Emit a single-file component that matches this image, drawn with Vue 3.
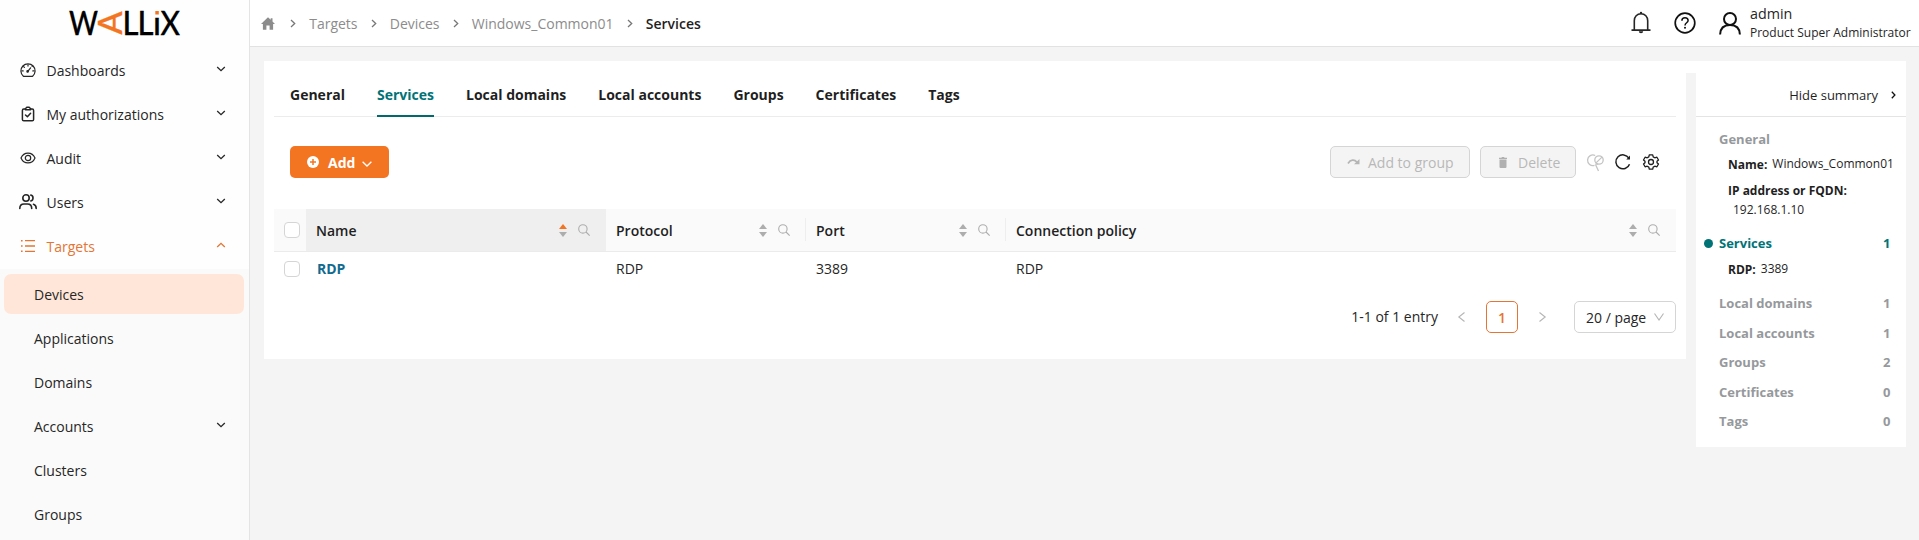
<script setup>
const menu = [
  { label: 'Dashboards', icon: 'dash' },
  { label: 'My authorizations', icon: 'clip' },
  { label: 'Audit', icon: 'eye' },
  { label: 'Users', icon: 'users' },
  { label: 'Targets', icon: 'list', open: true }
]
const submenu = [
  { label: 'Devices', active: true },
  { label: 'Applications' },
  { label: 'Domains' },
  { label: 'Accounts', expandable: true },
  { label: 'Clusters' },
  { label: 'Groups' }
]
const crumbs = ['Targets', 'Devices', 'Windows_Common01', 'Services']
const tabs = ['General', 'Services', 'Local domains', 'Local accounts', 'Groups', 'Certificates', 'Tags']
const columns = ['Name', 'Protocol', 'Port', 'Connection policy']
const counts = [
  ['Local domains', 1],
  ['Local accounts', 1],
  ['Groups', 2],
  ['Certificates', 0],
  ['Tags', 0]
]
</script>

<template>
  <div class="app">
    <aside class="sidebar">
      <div class="brand">
        <svg width="112" height="26" viewBox="0 0 112 26" class="logo">
          <text x="0" y="25" textLength="29" lengthAdjust="spacingAndGlyphs">W</text>
          <text class="mark" transform="translate(53 24.500) rotate(-90)" x="0" y="0" textLength="23" lengthAdjust="spacingAndGlyphs">A</text>
          <text x="53.5" y="25" textLength="16" lengthAdjust="spacingAndGlyphs">L</text>
          <text x="68.5" y="25" textLength="16" lengthAdjust="spacingAndGlyphs">L</text>
          <text x="84" y="25" textLength="8" lengthAdjust="spacingAndGlyphs">ı</text>
          <rect x="86.300" y="1" width="3.500" height="3.500" fill="#f37521" />
          <text x="91.500" y="25" textLength="19.500" lengthAdjust="spacingAndGlyphs">X</text>
        </svg>
      </div>
      <nav>
        <div v-for="m in menu" :key="m.label" class="item" :class="{ open: m.open }">
          <svg class="mi" width="20" height="18" viewBox="0 0 20 18" fill="none" stroke="currentColor" stroke-width="1.2" stroke-linecap="round" stroke-linejoin="round">
            <g v-if="m.icon === 'dash'">
              <path d="M5.4 15.3A7.1 7.1 0 1 1 14.6 15.3Z" />
              <path d="M9.6 10.6L12.6 6.8M10 3.8v1.3M5.6 5.6l.8.8M3.9 9.9h1.3M14.8 9.9h1.3M14.1 5.3l.4-.4" />
              <circle cx="9.6" cy="10.4" r=".7" fill="currentColor" />
            </g>
            <g v-else-if="m.icon === 'clip'" stroke-width="1.5">
              <path d="M7.3 4H5.8a1.4 1.4 0 0 0-1.4 1.4v9a1.4 1.4 0 0 0 1.4 1.4h8.4a1.4 1.4 0 0 0 1.4-1.4v-9A1.4 1.4 0 0 0 14.200 4H12.700" />
              <path d="M7.400 4.800V3.700L8.800 2.300H11.200L12.600 3.700V4.800ZM7.500 10l1.900 1.800 3.200-3.500" />
            </g>
            <g v-else-if="m.icon === 'eye'">
              <path d="M3 9C5.800 2.400 14.200 2.400 17 9C14.200 15.600 5.800 15.600 3 9Z" />
              <circle cx="10" cy="9" r="2.700" />
            </g>
            <g v-else-if="m.icon === 'users'" stroke-width="1.600">
              <circle cx="8" cy="5" r="3.200" />
              <path d="M1.800 15.500C1.800 12.500 3.500 11 6 11H9.500C12 11 13.700 12.500 13.700 15.500M12.800 2.100A3 3 0 0 1 12.800 7.900M15.500 11.300C17.400 11.800 18.200 13.300 18.200 15.500" />
            </g>
            <g v-else stroke-linecap="butt">
              <path d="M7 3.700H17M7 9H17M7 14.300H17" stroke-width="1.300" />
              <path d="M3 3.700h1.600M3 9h1.600M3 14.300h1.600" stroke-width="1.600" />
            </g>
          </svg>
          <span>{{ m.label }}</span>
          <svg class="chev" width="10" height="6" viewBox="0 0 10 6"><path :d="m.open ? 'M1.200 5L5 1.300L8.800 5' : 'M1.200 1L5 4.700L8.800 1'" /></svg>
        </div>
      </nav>
      <div class="sub">
        <div v-for="s in submenu" :key="s.label" class="subitem" :class="{ active: s.active }">
          <span>{{ s.label }}</span>
          <svg v-if="s.expandable" class="chev" width="10" height="6" viewBox="0 0 10 6"><path d="M1.200 1L5 4.700L8.800 1" /></svg>
        </div>
      </div>
    </aside>

    <div class="main">
      <header class="top">
        <svg class="home" width="14" height="13" viewBox="0 0 14 13"><path d="M7 .3L9.700 2.800V1.300H11.500V4.500L14 6.900H12.100V12.700H8.600V8.400H5.400V12.700H1.900V6.900H0Z" fill="#8c8c8c" /></svg>
        <template v-for="(c, i) in crumbs" :key="c">
          <svg class="sep" width="6" height="9" viewBox="0 0 6 9"><path d="M1 1L4.700 4.500L1 8" fill="none" stroke="#777" stroke-width="1.300" /></svg>
          <span class="crumb" :class="{ last: i === 3 }">{{ c }}</span>
        </template>
        <div class="user">
          <svg width="20" height="24" viewBox="0 0 20 24" fill="none" stroke="#262626" stroke-width="1.600">
            <path d="M3.300 18.500V9.700C3.300 5.800 6 2.800 10 2.800S16.700 5.800 16.700 9.700V18.500M.5 19.100H19.500M10 2.800V1" />
            <path d="M7.800 20.300H12.200A2.200 1.900 0 0 1 7.800 20.300Z" fill="#262626" stroke="none" />
            <circle cx="10" cy="2" r="1.200" fill="#262626" stroke="none" />
          </svg>
          <svg class="help" width="22" height="22" viewBox="0 0 22 22" fill="none" stroke="#111">
            <circle cx="11" cy="11" r="9.800" stroke-width="1.700" />
            <path d="M7.900 8.700C7.900 6.700 9.200 5.700 11 5.700S14.100 6.800 14.100 8.500C14.100 10.700 11 10.800 11 13.400" stroke-width="1.500" />
            <circle cx="11" cy="15.800" r="1" fill="#111" stroke="none" />
          </svg>
          <svg class="person" width="22" height="23" viewBox="0 0 22 23" fill="none" stroke="#111" stroke-width="2">
            <circle cx="11" cy="7" r="6" />
            <path d="M1.100 22.500C1.300 16.500 5 13 11 13S20.700 16.500 20.900 22.500" />
          </svg>
          <div class="who">
            <div class="uname">admin</div>
            <div class="role">Product Super Administrator</div>
          </div>
        </div>
      </header>

      <div class="strip"></div>
      <div class="body">
        <section class="card">
          <div class="tabs">
            <div v-for="t in tabs" :key="t" class="tab" :class="{ on: t === 'Services' }">{{ t }}</div>
          </div>
          <div class="tools">
            <button class="add">
              <svg width="12" height="12" viewBox="0 0 12 12"><circle cx="6" cy="6" r="6" fill="#fff" /><path d="M6 3V9M3 6H9" stroke="#f37521" stroke-width="1.500" /></svg>
              <span>Add</span>
              <svg class="caret" width="10" height="6" viewBox="0 0 10 6"><path d="M.6 .7L5 5L9.400 .7" fill="none" stroke="#fff" stroke-width="1.300" /></svg>
            </button>
            <button class="dis togroup">
              <svg width="13" height="8" viewBox="0 0 13 8"><path d="M1 5.500C3.500 1.300 7.500 1.200 10 4.200" fill="none" stroke="#b5b5b5" stroke-width="1.700" /><path d="M12.500 1V6.300H7Z" fill="#b5b5b5" /></svg>
              <span>Add to group</span>
            </button>
            <button class="dis del">
              <svg width="8" height="11" viewBox="0 0 8 11"><path d="M0 .7H2.400L3 0H5L5.600 .7H8V2H0ZM.5 2.600H7.500V10A1 1 0 0 1 6.500 11H1.500A1 1 0 0 1 .5 10Z" fill="#b0b0b0" /></svg>
              <span>Delete</span>
            </button>
            <svg class="t1" width="17" height="18" viewBox="0 0 17 18" fill="none" stroke="#c4c4c4" stroke-width="1.300">
              <path d="M8.200 1.500A5.300 5.300 0 1 0 7.500 11.300M8.500 10.500L11.500 17" />
              <circle cx="12" cy="6" r="4.200" /><path d="M9 8.900L15 3.100M8.500 10.200L11.200 10" />
            </svg>
            <svg class="t2" width="16" height="16" viewBox="0 0 16 16" fill="none" stroke="#1f1f1f" stroke-width="1.500">
              <path d="M13.900 4.200A7 7 0 1 0 14.500 10.200" /><path d="M15 1.600V5.600H11.300Z" fill="#1f1f1f" stroke="none" />
            </svg>
            <svg class="t3" width="16" height="16" viewBox="0 0 16 16" fill="none" stroke="#1f1f1f" stroke-width="1.300" stroke-linejoin="round">
              <path d="M6.300 .8H9.700L10.200 2.900L11.800 3.800L13.900 3.200L15.500 6L14 7.300V8.700L15.500 10L13.900 12.800L11.800 12.200L10.200 13.100L9.700 15.200H6.300L5.800 13.100L4.200 12.200L2.100 12.800L.5 10L2 8.700V7.300L.5 6L2.100 3.200L4.200 3.800L5.800 2.900Z" />
              <circle cx="8" cy="8" r="2.500" />
            </svg>
          </div>

          <div class="row thead">
            <div class="cb"><i></i></div>
            <div v-for="(c, i) in columns" :key="c" class="th" :class="{ sorted: i === 0, div: i > 1 }">
              <span>{{ c }}</span>
              <svg class="sort" width="8" height="13" viewBox="0 0 8 13"><path d="M4 0L8 5H0Z" :fill="i === 0 ? '#f37521' : '#adadad'" /><path d="M4 13L8 8H0Z" fill="#adadad" /></svg>
              <svg width="12" height="12" viewBox="0 0 12 12" fill="none" stroke="#adadad" stroke-width="1.100"><circle cx="4.900" cy="4.900" r="4.200" /><path d="M8 8L11.700 11.700" /></svg>
            </div>
          </div>
          <div class="row tr">
            <div class="cb"><i></i></div>
            <div class="td link">RDP</div>
            <div class="td">RDP</div>
            <div class="td">3389</div>
            <div class="td">RDP</div>
          </div>

          <div class="pager">
            <span class="total">1-1 of 1 entry</span>
            <svg class="pv" width="7" height="10" viewBox="0 0 7 10"><path d="M6.500 .5L.8 5L6.500 9.500" /></svg>
            <span class="page">1</span>
            <svg class="nx" width="7" height="10" viewBox="0 0 7 10"><path d="M.5 .5L6.200 5L.5 9.500" /></svg>
            <div class="size">
              <span>20 / page</span>
              <svg width="10" height="8" viewBox="0 0 10 8"><path d="M.5 .5L5 7L9.500 .5" /></svg>
            </div>
          </div>
        </section>

        <section class="summary">
          <div class="hide">
            <span>Hide summary</span>
            <svg width="5" height="8" viewBox="0 0 5 8"><path d="M.8 .8L3.900 4L.8 7.200" fill="none" stroke="#111" stroke-width="1.300" /></svg>
          </div>
          <div class="sh first">General</div>
          <div class="kv"><b>Name:</b><span>Windows_Common01</span></div>
          <div class="kv ip"><b>IP address or FQDN:</b></div>
          <div class="addr">192.168.1.10</div>
          <div class="sh svc"><i class="dot"></i><span>Services</span><span>1</span></div>
          <div class="kv rdp"><b>RDP:</b><span>3389</span></div>
          <div class="counts">
            <div v-for="c in counts" :key="c[0]" class="sh"><span>{{ c[0] }}</span><span>{{ c[1] }}</span></div>
          </div>
        </section>
      </div>
    </div>
  </div>
</template>

<style>
body { margin: 0; background: #f4f4f4; overflow: hidden; }
</style>

<style scoped>
.app { display: flex; width: 1919px; height: 540px; overflow: hidden; font-family: "Open Sans", "Noto Sans", sans-serif; font-size: 14px; line-height: 20px; color: #262626; background: #f4f4f4; }
.app * { box-sizing: border-box; }
svg { flex: none; display: block; overflow: visible; }
.sidebar { width: 250px; flex: none; background: #fefefe; border-right: 1px solid #e4e4e4; height: 540px; }
.brand { height: 48px; padding: 10px 0 0 69px; }
.logo text { font-family: Lato, sans-serif; font-weight: 500; font-size: 33px; fill: #000; stroke: #000; stroke-width: .3px; }
.logo .mark { fill: #f37521; stroke: #f37521; }
.item { height: 44px; display: flex; align-items: center; padding: 0 23px 0 18px; }
.item span { margin-left: 8.500px; flex: 1; padding-top: 1px; }
.item.open { color: #e37535; }
.chev { fill: none; stroke: currentColor; stroke-width: 1.300; position: relative; top: -1px; }
.sub { background: #fafafa; height: 272px; margin-top: 1px; padding: 5px 5px 0 4px; }
.subitem { height: 40px; margin-bottom: 4px; border-radius: 7px; display: flex; align-items: center; padding: 2px 18px 0 30px; }
.subitem span { flex: 1; }
.subitem .chev { top: -2px; }
.subitem.active { background: #ffe6d9; }

.main { flex: 1; min-width: 0; }
.top { height: 47px; background: #fff; border-bottom: 1px solid #e2e2e2; display: flex; align-items: center; padding: 0 9px 0 11px; }
.home { margin-right: 2px; }
.sep { margin: 0 13px 0 13.200px; }
.crumb { color: #8c8c8c; padding-top: 2px; }
.crumb.last { color: #1f1f1f; font-weight: 600; }
.user { margin-left: auto; display: flex; align-items: center; }
.help { margin-left: 23px; }
.person { margin: 0 9px 0 23px; }
.who { width: 160px; white-space: nowrap; }
.uname { font-weight: 500; line-height: 18px; margin-top: 1px; font-size: 14.300px; }
.role { font-size: 12px; line-height: 20px; }

.strip { margin: 14px 13px 0 14px; height: 12px; background: #fff; }
.body { display: flex; align-items: flex-start; gap: 10px; margin: 0 13px 0 14px; }
.card { width: 1422px; height: 286px; background: #fff; padding: 0 10px; }
.tabs { height: 44px; border-bottom: 1px solid #ececec; display: flex; padding-left: 16px; gap: 32px; }
.tab { height: 44px; padding-top: 12px; font-weight: 700; color: #1f1f1f; border-bottom: 2px solid transparent; white-space: nowrap; }
.tab.on { color: #007377; border-color: #00696d; }
.tools { height: 92px; padding: 29px 15px 0 16px; display: flex; align-items: flex-start; }
button { font: inherit; height: 32px; border-radius: 5px; display: flex; align-items: center; padding: 0 0 0 17px; border: 0; white-space: nowrap; }
.add { width: 99px; background: #f37521; color: #fff; font-weight: 700; margin-right: auto; }
.add span { margin: 2px 7px 0 9px; }
.caret { position: relative; top: 2px; }
.dis { border: 1px solid #d5d5d5; background: #f4f4f4; color: #b8b8b8; }
.dis span { padding-top: 2px; }
.togroup { width: 140px; margin-right: 10px; padding-left: 16px; }
.togroup span { margin-left: 8px; }
.del { width: 96px; margin-right: 11px; padding-left: 18px; }
.del span { margin-left: 11px; }
.t1 { margin: 8px 11px 0 0; }
.t2 { margin: 8px 12px 0 0; }
.t3 { margin: 8px 2px 0 0; }

.row { display: grid; grid-template-columns: 32px 300px 200px 200px 1fr; }
.thead { height: 43px; background: #fafafa; border-bottom: 1px solid #ebebeb; font-weight: 600; color: #1f1f1f; }
.cb { display: flex; align-items: center; justify-content: center; padding-left: 4px; }
.cb i { width: 16px; height: 16px; border: 1px solid #d5d5d5; border-radius: 4px; background: #fff; }
.th { display: flex; align-items: center; padding: 0 16px 0 10px; position: relative; }
.th span { flex: 1; padding-top: 2px; }
.th .sort { margin-right: 11px; }
.th.sorted { background: #efefef; }
.th.div::before { content: ""; position: absolute; left: -1px; top: 9px; width: 1px; height: 23px; background: #eeeeee; }
.tr { height: 34px; }
.td { padding: 7px 0 0 10px; }
.link { color: #126a8f; font-weight: 700; padding-left: 11px; }

.pager { display: flex; align-items: center; justify-content: flex-end; height: 32px; margin-top: 15px; }
.pager svg { fill: none; stroke: #b5b5b5; stroke-width: 1.100; }
.total { margin-right: 20px; }
.pv { margin-right: 21px; }
.page { width: 32px; height: 32px; border: 1px solid #e37535; border-radius: 5px; color: #e37535; font-weight: 600; text-align: center; line-height: 32px; }
.nx { margin: 0 28px 0 21px; }
.size { width: 102px; height: 32px; border: 1px solid #d5d5d5; border-radius: 5px; display: flex; align-items: center; justify-content: space-between; padding: 0 11px; }
.size span { padding-top: 2px; }

.summary { width: 210px; height: 374px; background: #fff; font-size: 13px; }
.hide { height: 44px; border-bottom: 1px solid #e4e4e4; display: flex; justify-content: flex-end; align-items: center; gap: 13px; padding: 0 10px 0 0; color: #1f1f1f; }
.sh { font-weight: 700; color: #96999c; display: flex; justify-content: space-between; padding: 0 15.500px 0 23px; }
.first { margin-top: 12px; }
.kv { font-size: 12px; padding-left: 32px; display: flex; gap: 5px; margin-top: 5px; color: #1f1f1f; white-space: nowrap; }
.kv b { position: relative; top: 1px; }
.kv.ip { margin-top: 6px; }
.addr { font-size: 12px; line-height: 18px; padding: 1px 0 0 37px; }
.svc { color: #007377; margin-top: 14px; position: relative; }
.dot { position: absolute; left: 8px; top: 6px; width: 9px; height: 9px; border-radius: 50%; background: #007377; }
.rdp { margin-top: 6px; }
.counts { margin-top: 14px; display: grid; row-gap: 9.500px; }
</style>
